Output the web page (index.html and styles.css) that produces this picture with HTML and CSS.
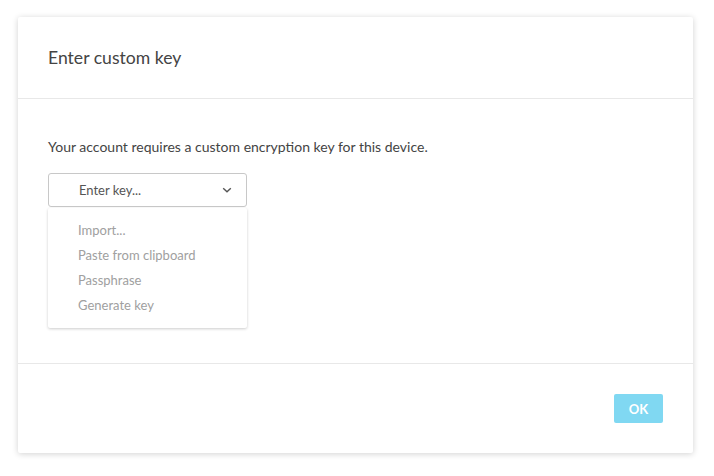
FILE: index.html
```html
<!DOCTYPE html>
<html>
<head>
<meta charset="utf-8">
<link rel="stylesheet" href="styles.css">
</head>
<body>
<div class="page">
  <div class="dialog">
    <div class="dialog-header">
      <h1 class="title">Enter custom key</h1>
    </div>
    <div class="dialog-body">
      <p class="message">Your account requires a custom encryption key for this device.</p>
      <div class="select-wrap">
        <div class="select">
          <span class="select-label">Enter key...</span>
          <svg class="chevron" width="10" height="6" viewBox="0 0 10 6"><path d="M1.2 1.2 L5 4.8 L8.8 1.2" fill="none" stroke="#555" stroke-width="1.4"/></svg>
        </div>
        <ul class="menu">
          <li class="menu-item">Import...</li>
          <li class="menu-item">Paste from clipboard</li>
          <li class="menu-item">Passphrase</li>
          <li class="menu-item">Generate key</li>
        </ul>
      </div>
    </div>
    <div class="dialog-footer">
      <button class="btn-ok">OK</button>
    </div>
  </div>
</div>
</body>
</html>
```
FILE: styles.css
```css
* { box-sizing: border-box; }
html, body { margin: 0; padding: 0; background: #fff; }
body { font-family: "Lato", "Open Sans", "Liberation Sans", sans-serif; color: #444; }
.page { padding: 17px 21px 23px 18px; }
.dialog {
  width: 675px;
  height: 436px;
  background: #fff;
  border-radius: 2px;
  box-shadow: 0 1px 6px rgba(0,0,0,0.18);
  display: flex;
  flex-direction: column;
}
.dialog-header {
  height: 82px;
  border-bottom: 1px solid #e8e8e8;
  display: flex;
  align-items: center;
  padding: 0 30px;
}
.title {
  margin: 0;
  font-size: 17.6px;
  font-weight: 400;
  color: #444;
}
.dialog-body {
  flex: 1;
  padding: 38px 30px 0;
  border-bottom: 1px solid #e8e8e8;
}
.message {
  margin: 0 0 17px;
  font-size: 14px;
  line-height: 19px;
  color: #444;
}
.select-wrap { width: 199px; }
.select {
  height: 34px;
  border: 1px solid #c8c8c8;
  border-radius: 3px;
  display: flex;
  align-items: center;
  justify-content: space-between;
  padding: 0 14px 0 30px;
}
.select-label { font-size: 13px; color: #555; }
.chevron { display: block; }
.menu {
  list-style: none;
  margin: 1px 0 0;
  padding: 10px 0 10px;
  background: #fff;
  border-radius: 2px;
  box-shadow: 0 1px 3px rgba(0,0,0,0.2);
}
.menu-item {
  padding: 0 30px;
  font-size: 13px;
  line-height: 25px;
  color: #a0a0a0;
}
.dialog-footer {
  height: 89px;
  display: flex;
  align-items: flex-start;
  justify-content: flex-end;
  padding: 30px 30px 0;
}
.btn-ok {
  width: 49px;
  height: 29px;
  border: none;
  border-radius: 2px;
  background: #80d8f2;
  color: #fff;
  font-family: "Lato", "Open Sans", "Liberation Sans", sans-serif;
  font-weight: 700;
  font-size: 13px;
  padding: 0;
}
```
